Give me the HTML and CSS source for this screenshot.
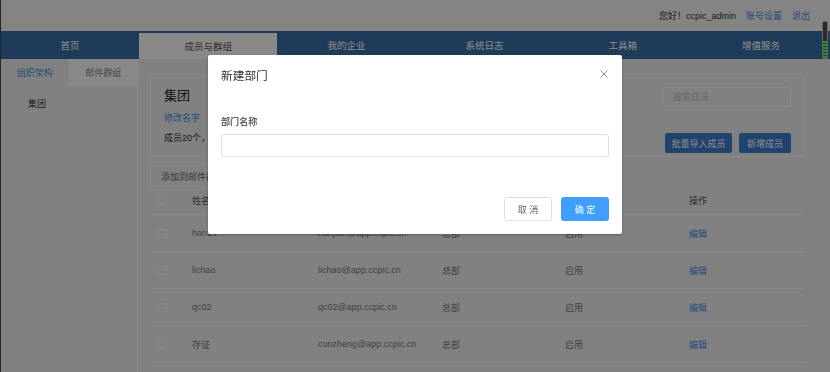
FILE: index.html
```html
<!DOCTYPE html>
<html lang="zh-CN">
<head>
    <meta charset="UTF-8" />
    <meta name="viewport" content="width=device-width, initial-scale=1.0"/>
    <title>成员与群组</title>
    <link rel="stylesheet" href="styles.css">
</head>
<body>
    <div class="page">
        <header class="topbar">
            <span class="greet">您好！ccpic_admin</span>
            <a class="top-link" href="#">账号设置</a>
            <a class="top-link" href="#">退出</a>
        </header>

        <nav class="nav">
            <a class="nav-item" href="#">首页</a>
            <a class="nav-item active" href="#">成员与群组</a>
            <a class="nav-item" href="#">我的企业</a>
            <a class="nav-item" href="#">系统日志</a>
            <a class="nav-item" href="#">工具箱</a>
            <a class="nav-item" href="#">增值服务</a>
        </nav>

        <div class="layout">
            <aside class="sidebar">
                <div class="side-tabs">
                    <span class="side-tab active">组织架构</span>
                    <span class="side-tab">邮件群组</span>
                </div>
                <ul class="tree">
                    <li>集团</li>
                </ul>
            </aside>

            <main class="content">
                <section class="dept-card">
                    <div class="dept-info">
                        <h2 class="dept-name">集团</h2>
                        <a class="rename" href="#">修改名字</a>
                        <p class="dept-count">成员20个，部门3个</p>
                    </div>
                    <div class="dept-actions">
                        <input class="search" type="text" placeholder="搜索成员">
                        <div class="btn-row">
                            <button class="btn btn-dark">批量导入成员</button>
                            <button class="btn btn-dark">新增成员</button>
                        </div>
                    </div>
                </section>

                <button class="btn btn-outline">添加到邮件群组</button>

                <div class="member-table">
                    <div class="row row-head">
                        <span><i class="check"></i></span>
                        <span>姓名</span>
                        <span>邮箱</span>
                        <span>部门</span>
                        <span>状态</span>
                        <span>操作</span>
                    </div>
                    <div class="row">
                        <span><i class="check"></i></span>
                        <span>han14</span>
                        <span>hanjian@app.ccpic.cn</span>
                        <span>总部</span>
                        <span>启用</span>
                        <span><a class="edit" href="#">编辑</a></span>
                    </div>
                    <div class="row">
                        <span><i class="check"></i></span>
                        <span>lichao</span>
                        <span>lichao@app.ccpic.cn</span>
                        <span>总部</span>
                        <span>启用</span>
                        <span><a class="edit" href="#">编辑</a></span>
                    </div>
                    <div class="row">
                        <span><i class="check"></i></span>
                        <span>qc02</span>
                        <span>qc02@app.ccpic.cn</span>
                        <span>总部</span>
                        <span>启用</span>
                        <span><a class="edit" href="#">编辑</a></span>
                    </div>
                    <div class="row">
                        <span><i class="check"></i></span>
                        <span>存证</span>
                        <span>cunzheng@app.ccpic.cn</span>
                        <span>总部</span>
                        <span>启用</span>
                        <span><a class="edit" href="#">编辑</a></span>
                    </div>
                </div>
            </main>
        </div>
    </div>

    <!-- modal: 新建部门 -->
    <div class="mask"></div>
    <div class="dialog">
        <div class="dialog-header">
            <span class="dialog-title">新建部门</span>
            <button class="dialog-close" aria-label="关闭">
                <svg width="8" height="8" viewBox="0 0 8 8">
                    <path d="M0.5 0.5L7.5 7.5M7.5 0.5L0.5 7.5" stroke="#909399" stroke-width="1" fill="none"/>
                </svg>
            </button>
        </div>
        <div class="dialog-body">
            <div class="form-item">
                <label class="form-label">部门名称</label>
                <input class="form-input" type="text">
            </div>
        </div>
        <div class="dialog-footer">
            <button class="dbtn dbtn-default">取 消</button>
            <button class="dbtn dbtn-primary">确 定</button>
        </div>
    </div>

    <div class="meter"><span class="meter-level"></span></div>
</body>
</html>
```

FILE: styles.css
```css
* {
    margin: 0;
    padding: 0;
    box-sizing: border-box;
    font-family: "Liberation Sans", "Noto Sans CJK SC", sans-serif;
}

html, body {
    width: 830px;
    height: 372px;
    overflow: hidden;
}

body {
    background-color: #ececec;
    font-size: 9px;
    color: #666;
}

a {
    text-decoration: none;
}

.page {
    height: 100%;
    display: flex;
    flex-direction: column;
    border-left: 1px solid #444;
}

/* top bar */
.topbar {
    height: 31px;
    flex-shrink: 0;
    display: flex;
    justify-content: flex-end;
    align-items: center;
    gap: 10px;
    padding-right: 20px;
    background-color: #f0f0f0;
}

.greet {
    color: #333;
}

.top-link {
    color: #4a8ee0;
}

/* main nav */
.nav {
    height: 28px;
    flex-shrink: 0;
    display: flex;
    background-color: #386ca2;
}

.nav-item {
    flex: 1;
    display: flex;
    justify-content: center;
    align-items: center;
    color: #fff;
    font-size: 9.5px;
}

.nav-item.active {
    margin-top: 2px;
    background-color: #fafafa;
    color: #555;
}

/* body layout */
.layout {
    flex: 1;
    display: flex;
    min-height: 0;
}

.sidebar {
    width: 137px;
    flex-shrink: 0;
    border-right: 1px solid #fafafa;
}

.side-tabs {
    display: flex;
    height: 27px;
}

.side-tab {
    flex: 1;
    display: flex;
    justify-content: center;
    align-items: center;
    color: #888;
}

.side-tab.active {
    color: #4a8ee0;
}

.side-tab + .side-tab {
    background-color: #f7f7f7;
    border-left: 1px solid #fafafa;
    border-bottom: 1px solid #fafafa;
}

.tree {
    list-style: none;
    padding: 8px 0 0 27px;
}

.tree li {
    line-height: 20px;
    color: #333;
}

.content {
    flex: 1;
    padding: 15px 25px 0 12px;
}

/* department card */
.dept-card {
    display: flex;
    justify-content: space-between;
    align-items: flex-start;
    border: 1px solid #fafafa;
    border-radius: 2px;
    padding: 11px 13px 3px;
}

.dept-name {
    font-size: 13px;
    font-weight: normal;
    line-height: 20px;
    color: #222;
}

.rename {
    display: block;
    margin-top: 2px;
    line-height: 20px;
    color: #4a8ee0;
}

.dept-count {
    line-height: 20px;
    color: #333;
}

.dept-actions {
    display: flex;
    flex-direction: column;
    align-items: flex-end;
    gap: 26px;
    margin-top: 1px;
}

.search {
    width: 128px;
    height: 20px;
    border: 1px solid #fafafa;
    border-radius: 2px;
    background-color: #ececec;
    padding: 0 9px;
    font-size: 9px;
    outline: none;
}

.search::placeholder {
    color: #bbb;
}

.btn-row {
    display: flex;
    gap: 7px;
}

.btn {
    height: 20px;
    font-size: 9px;
    border-radius: 2px;
    cursor: pointer;
}

.btn-dark {
    padding: 0 6.5px;
    border: none;
    background-color: #3c7cc8;
    color: #fff;
}

.btn-dark:last-child {
    width: 52px;
    padding: 0;
}

.btn-outline {
    display: block;
    margin-top: 8px;
    height: 22px;
    padding: 0 10px;
    border: 1px solid #fafafa;
    background-color: #ececec;
    color: #666;
}

/* members table */
.member-table {
    font-size: 9px;
}

.row {
    display: grid;
    grid-template-columns: 34px 126px 124px 123px 124px 1fr;
    align-items: center;
    height: 37px;
    padding-left: 8px;
    border-bottom: 1px solid #fafafa;
    color: #777;
}

.row-head {
    height: 28px;
    color: #555;
}

.check {
    display: block;
    width: 9px;
    height: 9px;
    border: 1px solid #fafafa;
    border-radius: 1.5px;
}

.edit {
    color: #4a8ee0;
}

/* modal */
.mask {
    position: fixed;
    inset: 0;
    background-color: rgba(0, 0, 0, 0.45);
}

.dialog {
    position: fixed;
    top: 55px;
    left: 0;
    right: 0;
    margin: 0 auto;
    width: 414px;
    background-color: #fff;
    border-radius: 2px;
    box-shadow: 0 1px 3px rgba(0, 0, 0, 0.3);
}

.dialog-header {
    position: relative;
    padding: 13px 13px 6.5px;
}

.dialog-title {
    display: block;
    font-size: 11.7px;
    line-height: 15.6px;
    color: #303133;
}

.dialog-close {
    position: absolute;
    top: 15px;
    right: 14px;
    width: 8px;
    height: 8px;
    border: none;
    background: none;
    display: flex;
}

.dialog-body {
    padding: 19.5px 13px;
}

.form-item {
    margin-bottom: 14.3px;
}

.form-label {
    display: block;
    line-height: 24px;
    font-size: 9.1px;
    font-weight: bold;
    color: #606266;
}

.form-input {
    display: block;
    width: 100%;
    height: 23.4px;
    border: 1px solid #dcdfe6;
    border-radius: 2.6px;
    outline: none;
}

.dialog-footer {
    display: flex;
    justify-content: flex-end;
    gap: 9px;
    padding: 6.5px 13px 13px;
}

.dbtn {
    width: 48px;
    height: 23.4px;
    font-size: 9.1px;
    border-radius: 2.6px;
    cursor: pointer;
}

.dbtn-default {
    border: 1px solid #dcdfe6;
    background-color: #fff;
    color: #606266;
}

.dbtn-primary {
    border: 1px solid #409eff;
    background-color: #409eff;
    color: #fff;
}

/* little level meter at the right edge */
.meter {
    position: fixed;
    top: 21px;
    right: 2px;
    width: 6px;
    height: 38px;
    border: 1px solid #666;
    border-radius: 2px;
    background-color: #2a2a2a;
    display: flex;
    flex-direction: column;
    justify-content: flex-end;
}

.meter-level {
    height: 17px;
    background: repeating-linear-gradient(to bottom, #2f8a3a 0, #2f8a3a 2px, #1c4a22 2px, #1c4a22 3px);
}
```
